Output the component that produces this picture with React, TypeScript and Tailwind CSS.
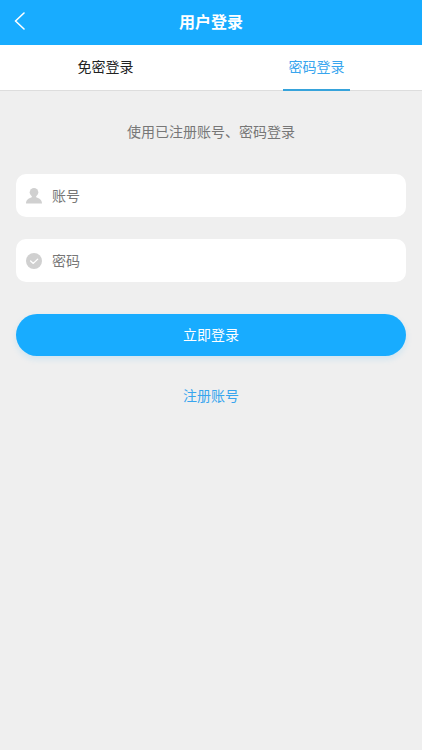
import { useState } from "react";

const fontStack = "font-['Liberation_Sans','Noto_Sans_CJK_SC',sans-serif]";

function BackIcon() {
  return (
    <svg width="12" height="18" viewBox="0 0 12 18" fill="none" stroke="white" strokeWidth="1.6" strokeLinecap="round" strokeLinejoin="round" aria-hidden="true">
      <path d="M10 1L1.500 9l8.500 8" />
    </svg>
  );
}

function UserIcon() {
  return (
    <svg width="16" height="16" viewBox="0 0 16 16" fill="#d0d0d0" aria-hidden="true">
      <ellipse cx="8" cy="4.300" rx="4.300" ry="4.300" />
      <path d="M5.800 7.500h4.400v1.700c3.400 1 5.800 2.600 5.800 6.300H0c0-3.700 2.400-5.300 5.800-6.300z" />
    </svg>
  );
}

function CheckIcon() {
  return (
    <svg width="16" height="16" viewBox="0 0 16 16" fill="none" aria-hidden="true">
      <circle cx="8" cy="8" r="8" fill="#d0d0d0" />
      <path d="M4.600 7.900l2.700 2.500 4.400-4.300" stroke="white" strokeWidth="1.300" strokeLinecap="round" strokeLinejoin="round" />
    </svg>
  );
}

interface FieldProps {
  label: string;
  type: string;
  autoComplete: string;
  icon: React.ReactNode;
}

function Field({ label, type, autoComplete, icon }: FieldProps) {
  return (
    <label className="flex h-[43px] items-center gap-2.5 rounded-[10px] bg-white px-2.5">
      {icon}
      <input
        type={type}
        aria-label={label}
        placeholder={label}
        autoComplete={autoComplete}
        className="min-w-0 flex-1 bg-transparent text-sm text-[#333333] outline-none placeholder:text-[#777777]"
      />
    </label>
  );
}

const tabs = ["免密登录", "密码登录"];

export default function App() {
  const [active, setActive] = useState(1);

  return (
    <div className={`min-h-screen bg-[#efefef] text-sm ${fontStack}`}>
      <header className="grid h-[45px] grid-cols-[1fr_auto_1fr] items-center bg-[#18acff] px-3.5 text-white">
        <button type="button" aria-label="返回" className="justify-self-start pb-1">
          <BackIcon />
        </button>
        <h1 className="text-base font-bold">用户登录</h1>
      </header>

      <nav className="grid h-[46px] grid-cols-2 border-b border-[#dddddd] bg-white">
        {tabs.map((tab, index) => (
          <button
            key={tab}
            type="button"
            onClick={() => setActive(index)}
            className={`-mb-px flex w-[67px] items-center justify-center justify-self-center border-b-2 whitespace-nowrap ${
              index === active ? "border-[#36a3db] text-[#38a5ee]" : "border-transparent text-[#222222]"
            }`}
          >
            {tab}
          </button>
        ))}
      </nav>

      <main className="px-4 pt-[31px]">
        <p className="text-center text-[#777777]">使用已注册账号、密码登录</p>
        <form className="pt-8" onSubmit={(event) => event.preventDefault()}>
          <div className="flex flex-col gap-[22px]">
            <Field label="账号" type="text" autoComplete="username" icon={<UserIcon />} />
            <Field label="密码" type="password" autoComplete="current-password" icon={<CheckIcon />} />
          </div>
          <button
            type="submit"
            className="mt-8 h-[42px] w-full rounded-full bg-[#18acff] text-white shadow-[0_3px_6px_rgba(24,172,255,0.15)]"
          >
            立即登录
          </button>
        </form>
        <div className="pt-[30px] text-center">
          <a href="#register" className="text-[#38a5ee]">
            注册账号
          </a>
        </div>
      </main>
    </div>
  );
}
